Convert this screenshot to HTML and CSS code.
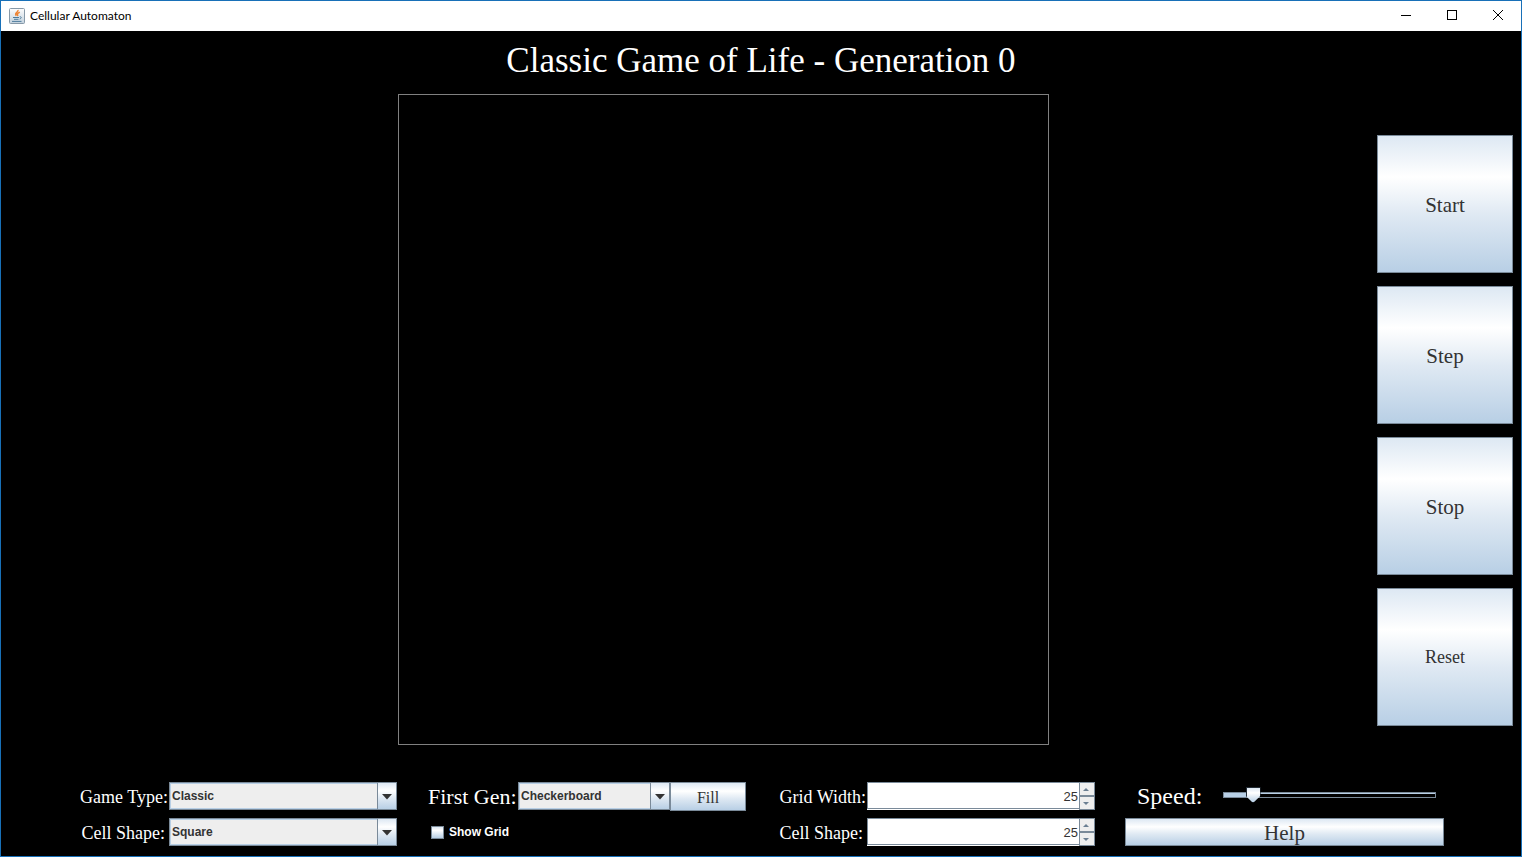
FILE: index.html
```html
<!DOCTYPE html>
<html lang="en">
<head>
<meta charset="utf-8">
<title>Cellular Automaton</title>
<link rel="stylesheet" href="styles.css">
</head>
<body>
<div class="window">
  <header class="titlebar">
    <svg class="app-icon" width="16" height="16" viewBox="0 0 16 16" aria-hidden="true">
      <defs><linearGradient id="tile" x1="0" y1="0" x2="0" y2="1"><stop offset="0" stop-color="#fdfdfd"/><stop offset="1" stop-color="#c3d2de"/></linearGradient></defs>
      <rect x=".5" y=".5" width="15" height="15" rx="1" fill="url(#tile)" stroke="#8799a8"/>
      <path d="M9 2C9.500 4.500 5 4.500 7.300 7.700M10.800 4.300C8 5.300 8 6.300 9 8" fill="none" stroke="#ee8434" stroke-width="1.500"/>
      <path d="M4 9.500H10M5 11.300H9.500M10.700 8.800C13 8.500 12.600 10.500 10.700 11M3 13.400H12.500" fill="none" stroke="#4e7c9d" stroke-width="1"/>
    </svg>
    <span class="app-name">Cellular Automaton</span>
    <div class="window-controls">
      <button class="window-button" aria-label="Minimize"><svg width="12" height="12"><path d="M1 5.500H11" stroke="#000"/></svg></button>
      <button class="window-button" aria-label="Maximize"><svg width="12" height="12"><rect x="1.500" y=".5" width="9" height="9" fill="none" stroke="#000"/></svg></button>
      <button class="window-button" aria-label="Close"><svg width="12" height="12"><path d="M1 0L11 10M11 0L1 10" stroke="#000"/></svg></button>
    </div>
  </header>
  <main class="content">
    <h1 class="heading">Classic Game of Life - Generation 0</h1>
    <div class="stage">
      <div class="board-area"><div class="board"></div></div>
      <div class="actions">
        <button class="metal action">Start</button>
        <button class="metal action">Step</button>
        <button class="metal action">Stop</button>
        <button class="metal action action-small">Reset</button>
      </div>
    </div>
    <form class="controls">
      <div class="group group-type">
        <label class="label" for="type">Game Type:</label>
        <span class="combo"><select id="type"><option>Classic</option></select><svg class="combo-arrow" viewBox="0 0 18 26" aria-hidden="true"><path d="M4 11H14L9 16.500Z"/></svg></span>
        <label class="label label-short" for="shape">Cell Shape:</label>
        <span class="combo"><select id="shape"><option>Square</option></select><svg class="combo-arrow" viewBox="0 0 18 26" aria-hidden="true"><path d="M4 11H14L9 16.500Z"/></svg></span>
      </div>
      <div class="group group-first">
        <div class="first-row">
          <label class="label label-large" for="first">First Gen:</label>
          <span class="combo"><select id="first"><option>Checkerboard</option></select><svg class="combo-arrow" viewBox="0 0 18 26" aria-hidden="true"><path d="M4 11H14L9 16.500Z"/></svg></span>
          <button class="metal fill" type="button">Fill</button>
        </div>
        <label class="check"><input type="checkbox">Show Grid</label>
      </div>
      <div class="group group-size">
        <label class="label" for="width">Grid Width:</label>
        <div class="spinner"><input id="width" type="text" value="25"><button class="spin" type="button" aria-label="Increase width"><svg width="6" height="3"><path d="M0 3L3 0L6 3Z"/></svg></button><button class="spin" type="button" aria-label="Decrease width"><svg width="6" height="3"><path d="M0 0H6L3 3Z"/></svg></button></div>
        <label class="label label-short" for="height">Cell Shape:</label>
        <div class="spinner"><input id="height" type="text" value="25"><button class="spin" type="button" aria-label="Increase height"><svg width="6" height="3"><path d="M0 3L3 0L6 3Z"/></svg></button><button class="spin" type="button" aria-label="Decrease height"><svg width="6" height="3"><path d="M0 0H6L3 3Z"/></svg></button></div>
      </div>
      <div class="group group-speed">
        <div class="speed-row">
          <label class="speed-label" for="speed">Speed:</label>
          <input class="slider" id="speed" type="range" min="0" max="100" value="11">
        </div>
        <button class="metal help" type="button">Help</button>
      </div>
    </form>
  </main>
</div>
</body>
</html>
```
FILE: styles.css
```css
* { box-sizing: border-box; }
body { margin: 0; font-family: "Liberation Serif", "Times New Roman", serif; }
button, input, select { font: inherit; margin: 0; padding: 0; border-radius: 0; }
.window { display: flex; flex-direction: column; min-height: 100vh; background: #000; border: 1px solid #1870b8; }
.titlebar { display: flex; align-items: center; height: 30px; padding-left: 8px; background: #fff; }
.app-icon { display: block; }
.app-name { margin-left: 5px; font: 12px/16px Lato, "Open Sans", sans-serif; color: #000; }
.window-controls { display: flex; margin-left: auto; }
.window-button { display: grid; place-items: center; width: 46px; height: 28px; border: 0; background: none; }
.window-button svg { display: block; }
.content { display: flex; flex: 1; flex-direction: column; }
.heading { margin: 0; padding-top: 8px; color: #fff; font-size: 35px; line-height: 44px; font-weight: 400; text-align: center; }
.stage { display: flex; flex: 1; padding: 11px 8px 0 0; }
.board-area { flex: 1; padding-left: 69px; }
.board { width: 651px; max-width: 100%; aspect-ratio: 1; margin: 0 auto; border: 1px solid #808080; }
.actions { display: grid; grid-auto-rows: 138px; gap: 13px; align-content: start; width: 136px; padding-top: 41px; }
.metal { padding-top: 2px; border: 1px solid #7a8a99; background: linear-gradient(#dde8f3, #fff 30%, #dfe9f3 58%, #b8cfe5); color: #333; }
.action { font-size: 21px; }
.action-small { padding-top: 0; font-size: 18px; }
.controls { display: flex; padding: 0 77px 10px; }
.group { display: grid; grid-auto-rows: 28px; row-gap: 8px; align-items: center; }
.group-type { grid-template-columns: 91px 1fr; flex: 319; }
.group-first { flex: 318; margin-left: 31px; }
.group-size { grid-template-columns: 90px 1fr; flex: 318; margin-left: 31px; }
.group-speed { flex: 319; margin-left: 30px; }
.label { padding: 2px 1px 0 0; color: #fff; font-size: 18px; line-height: 28px; text-align: right; white-space: nowrap; }
.label-short { padding-right: 4px; }
.label-large { padding-top: 1px; font-size: 22px; text-align: left; }
.combo { position: relative; display: block; height: 28px; }
.combo select { appearance: none; width: 100%; height: 28px; padding: 0 24px 0 2px; border: 1px solid #7a8a99; background: #eee; box-shadow: inset 0 0 0 1px #b8cfe5; color: #333; font: bold 12px/26px "Liberation Sans", Arial, sans-serif; }
.combo-arrow { position: absolute; top: 0; right: 0; width: 20px; height: 28px; border: 1px solid #7a8a99; background: linear-gradient(#dde8f3, #fff 30%, #dfe9f3 58%, #b8cfe5); fill: #333; pointer-events: none; }
.first-row { display: grid; grid-template-columns: 90px 1fr 76px; height: 28px; }
.fill { font-size: 16px; }
.check { display: flex; align-items: center; gap: 5px; padding-left: 3px; color: #fff; font: bold 12px/28px "Liberation Sans", Arial, sans-serif; }
.check input { appearance: none; width: 13px; height: 13px; border: 1px solid #7a8a99; background: linear-gradient(#dde8f3, #fff 30%, #b8cfe5); }
.spinner { display: grid; grid-template-columns: 1fr 16px; grid-template-rows: 14px 14px; background: #fff; }
.spinner input { grid-row: span 2; width: 100%; min-width: 0; height: 27px; padding: 2px 1px 0 0; border: 1px solid #7a8a99; border-right: 0; background: #fff; color: #333; text-align: right; font: 13px/24px "Liberation Sans", Arial, sans-serif; }
.spin { display: grid; place-items: center; padding-right: 2px; border: 1px solid #7a8a99; background: #eee; }
.spin svg { display: block; fill: #6b7f92; }
.speed-row { display: grid; grid-template-columns: 86px 1fr; align-items: start; padding: 0 8px 0 12px; }
.speed-label { color: #fff; font-size: 24px; line-height: 28px; }
.slider { appearance: none; display: block; width: 100%; height: 26px; background: none; }
.slider::-webkit-slider-runnable-track { height: 6px; border: 1px solid #7a8a99; background: linear-gradient(90deg, #b8cfe5 14%, transparent 14%), linear-gradient(#b8cfe5 1px, #000 1px); }
.slider::-webkit-slider-thumb { appearance: none; width: 15px; height: 16px; margin-top: -6px; border: 1px solid #222b34; background: linear-gradient(#dde8f3, #fff 35%, #b8cfe5); clip-path: polygon(0 0, 100% 0, 100% 55%, 50% 100%, 0 55%); }
.help { height: 28px; font-size: 21px; }
```
